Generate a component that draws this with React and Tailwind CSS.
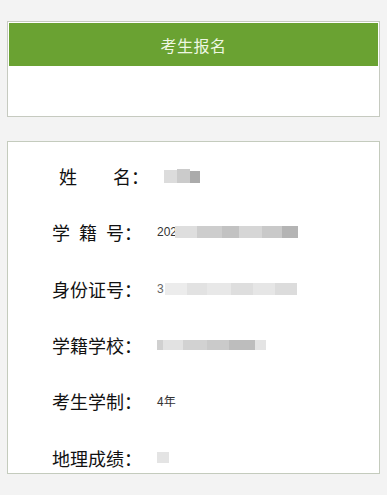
import React from "react";

const font = { fontFamily: '"Noto Sans CJK SC", "Noto Sans", sans-serif' };

function Label({ chars, pad = "" }) {
  return (
    <div className={`flex items-center ${pad}`}>
      <div className="flex w-[72px] justify-between text-[18px] leading-none text-[#111]">
        {chars.map((c, i) => (
          <span key={i}>{c}</span>
        ))}
      </div>
      <span className="w-[18px] text-[18px] leading-none text-[#111]">：</span>
    </div>
  );
}

function Row({ label, children }) {
  return (
    <div className="flex h-[56.3px] items-center pl-[44px]">
      {label}
      <div className="ml-[15px] flex items-center text-[12px] leading-none text-[#333]">
        {children}
      </div>
    </div>
  );
}

export default function App() {
  return (
    <div className="min-h-[495px] bg-[#f3f3f3] px-[7px] pt-[21px]" style={font}>
      <div className="h-[96px] border border-[#c6cac0] bg-white p-[1px]">
        <div className="flex h-[43px] items-center justify-center bg-[#6aa232] text-[16px] tracking-[0.5px] text-[#eef7e2]">
          考生报名
        </div>
      </div>

      <div className="mt-[24px] h-[333px] border border-[#c4cbbd] bg-white pt-[6px]">
        <Row label={<Label chars={["姓", "名"]} pad="pl-[7px]" />}>
          <div className="flex h-[14px] items-end blur-[0.4px]">
            <div className="h-[13px] w-[13px] bg-[#dcdcdc]" />
            <div className="h-[14px] w-[13px] bg-[#cbcbcb]" />
            <div className="h-[12px] w-[10px] bg-[#ababab]" />
          </div>
        </Row>
        <Row label={<Label chars={["学", "籍", "号"]} />}>
          <span className="font-['Liberation_Sans',sans-serif]">202</span>
          <div className="-ml-[2px] flex h-[12px] blur-[0.4px]">
            <div className="w-[22px] bg-[#dedede]" />
            <div className="w-[25px] bg-[#cdcdcd]" />
            <div className="w-[17px] bg-[#c2c2c2]" />
            <div className="w-[23px] bg-[#d6d6d6]" />
            <div className="w-[20px] bg-[#c9c9c9]" />
            <div className="w-[16px] bg-[#b4b4b4]" />
          </div>
        </Row>
        <Row label={<Label chars={["身", "份", "证", "号"]} />}>
          <span className="font-['Liberation_Sans',sans-serif] text-[#666]">3</span>
          <div className="ml-[1px] flex h-[12px] blur-[0.4px]">
            <div className="w-[22px] bg-[#ececec]" />
            <div className="w-[20px] bg-[#e2e2e2]" />
            <div className="w-[24px] bg-[#e8e8e8]" />
            <div className="w-[22px] bg-[#dedede]" />
            <div className="w-[22px] bg-[#e6e6e6]" />
            <div className="w-[22px] bg-[#dcdcdc]" />
          </div>
        </Row>
        <Row label={<Label chars={["学", "籍", "学", "校"]} />}>
          <div className="flex h-[10px] blur-[0.4px]">
            <div className="w-[6px] bg-[#d0d0d0]" />
            <div className="w-[20px] bg-[#e2e2e2]" />
            <div className="w-[24px] bg-[#d2d2d2]" />
            <div className="w-[22px] bg-[#cacaca]" />
            <div className="w-[26px] bg-[#bdbdbd]" />
            <div className="w-[11px] bg-[#e4e4e4]" />
          </div>
        </Row>
        <Row label={<Label chars={["考", "生", "学", "制"]} />}>
          <span>4年</span>
        </Row>
        <Row label={<Label chars={["地", "理", "成", "绩"]} />}>
          <div className="h-[11px] w-[12px] bg-[#e4e4e4] blur-[0.4px]" />
        </Row>
      </div>
    </div>
  );
}
